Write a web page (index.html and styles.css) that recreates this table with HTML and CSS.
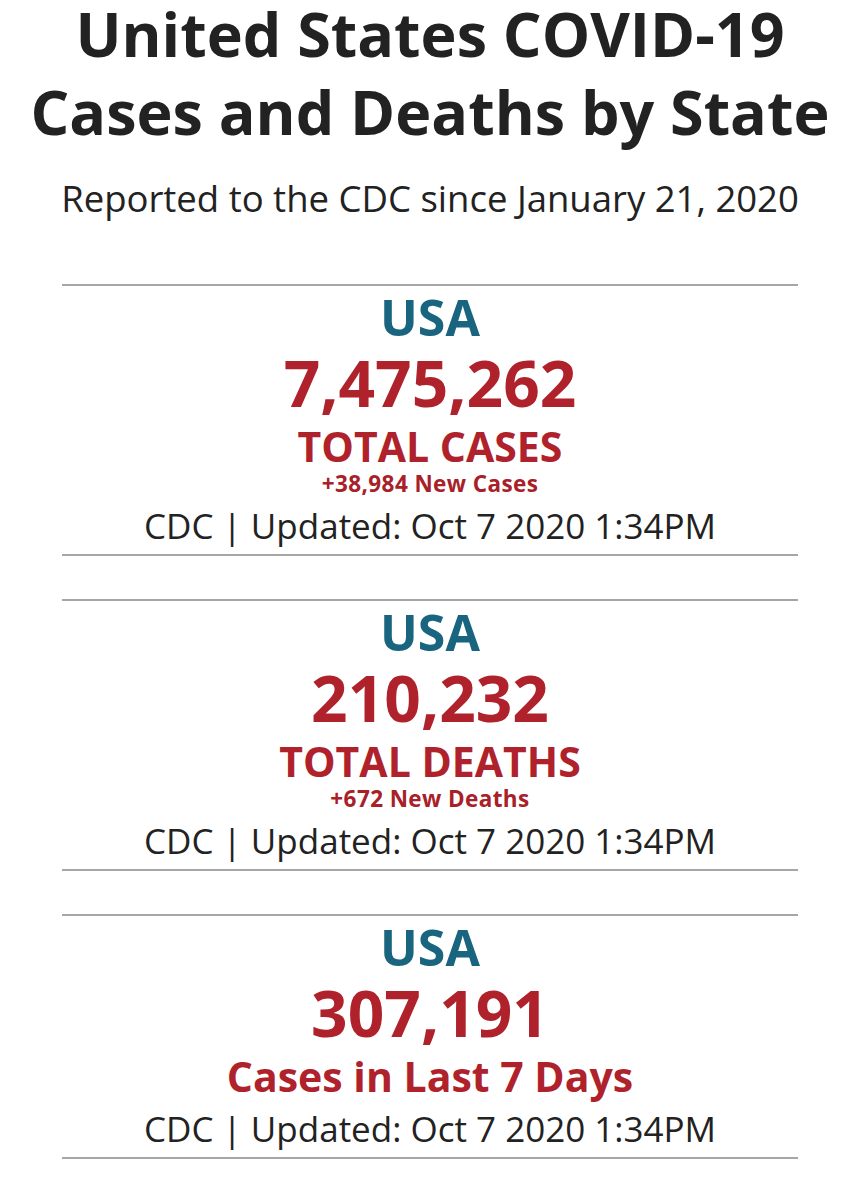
FILE: index.html
```html
<!DOCTYPE html>
<html lang="en">
<head>
<meta charset="utf-8">
<title>United States COVID-19 Cases and Deaths by State</title>
<link rel="stylesheet" href="styles.css">
</head>
<body>
<main class="page">
  <h1 class="title"><span class="title-line">United States COVID-19</span><span class="title-line">Cases and Deaths by State</span></h1>
  <p class="subtitle">Reported to the CDC since January 21, 2020</p>

  <section class="stat">
    <div class="region">USA</div>
    <div class="number">7,475,262</div>
    <div class="label">TOTAL CASES</div>
    <div class="delta">+38,984 New Cases</div>
    <div class="source">CDC | Updated: Oct 7 2020 1:34PM</div>
  </section>

  <section class="stat">
    <div class="region">USA</div>
    <div class="number">210,232</div>
    <div class="label">TOTAL DEATHS</div>
    <div class="delta">+672 New Deaths</div>
    <div class="source">CDC | Updated: Oct 7 2020 1:34PM</div>
  </section>

  <section class="stat">
    <div class="region">USA</div>
    <div class="number">307,191</div>
    <div class="label">Cases in Last 7 Days</div>
    <div class="source">CDC | Updated: Oct 7 2020 1:34PM</div>
  </section>
</main>
</body>
</html>
```

FILE: styles.css
```css
html, body {
  margin: 0;
  padding: 0;
  background: #ffffff;
}

body {
  font-family: "Open Sans", "Noto Sans", "DejaVu Sans", sans-serif;
  color: #222222;
}

.page {
  width: 736px;
  margin: 0 auto;
  display: flex;
  flex-direction: column;
  align-items: center;
  text-align: center;
}

.title {
  margin: 0;
  display: flex;
  flex-direction: column;
  align-items: center;
  gap: 10px;
  font-size: 61px;
  line-height: 68px;
  font-weight: 700;
  color: #222222;
}

.title-line {
  white-space: nowrap;
}

.subtitle {
  margin: 27px 0 61px;
  font-size: 36.5px;
  line-height: 50px;
  font-weight: 400;
  color: #222222;
  white-space: nowrap;
}

.stat {
  align-self: stretch;
  border-top: 2px solid #a6a6a6;
  border-bottom: 2px solid #a6a6a6;
  padding-top: 5px;
  margin-bottom: 43px;
  display: flex;
  flex-direction: column;
  align-items: center;
}

.region {
  font-size: 50px;
  line-height: 53px;
  font-weight: 700;
  color: #19647f;
}

.number {
  font-size: 64px;
  line-height: 78px;
  font-weight: 700;
  color: #b0222b;
}

.label {
  font-size: 41px;
  line-height: 48px;
  font-weight: 700;
  color: #b0222b;
}

.delta {
  font-size: 22.5px;
  line-height: 27px;
  font-weight: 700;
  letter-spacing: 0.4px;
  color: #a82028;
}

.source {
  font-size: 35px;
  line-height: 57px;
  font-weight: 400;
  color: #222222;
  white-space: nowrap;
}
```
